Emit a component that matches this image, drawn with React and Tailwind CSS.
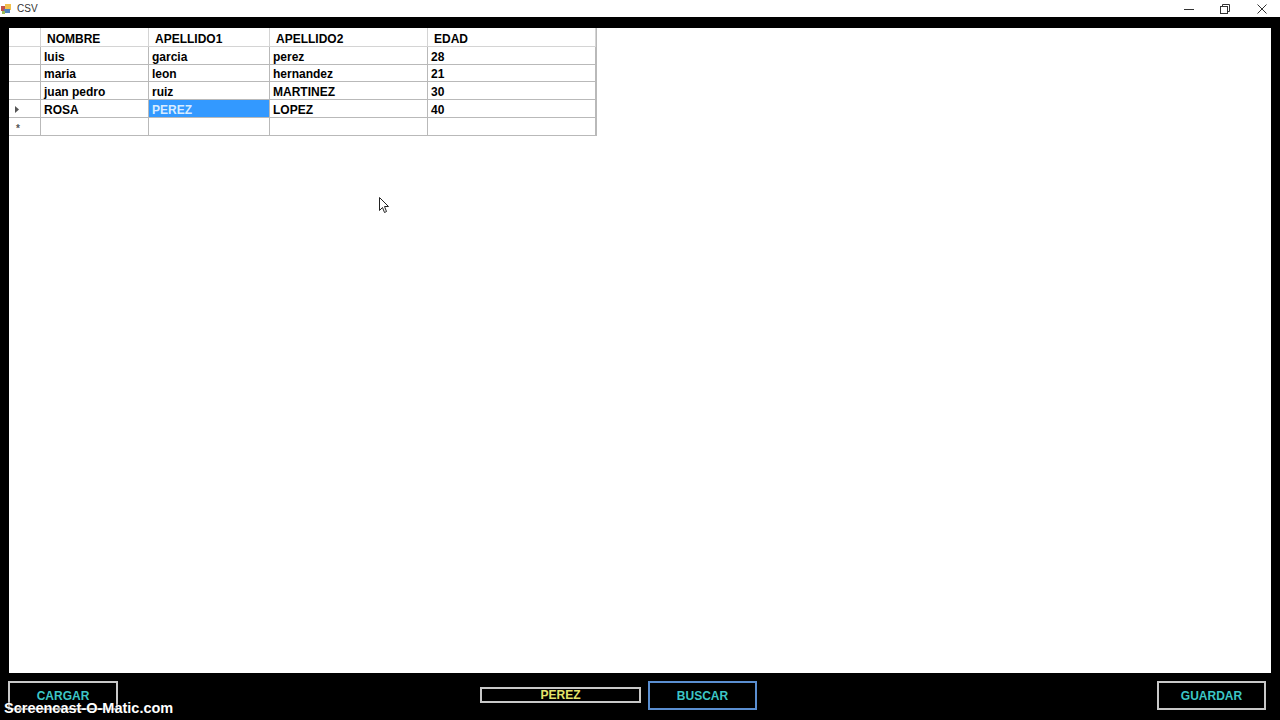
import React from "react";

const cols = ["NOMBRE", "APELLIDO1", "APELLIDO2", "EDAD"];
const rows = [
  { h: 18, cells: ["luis", "garcia", "perez", "28"] },
  { h: 17, cells: ["maria", "leon", "hernandez", "21"] },
  { h: 18, cells: ["juan pedro", "ruiz", "MARTINEZ", "30"] },
  { h: 18, cells: ["ROSA", "PEREZ", "LOPEZ", "40"], current: true },
];
const widths = ["w-[108px]", "w-[121px]", "w-[158px]", "w-[168px]"];

function Cell({ w, children, className = "" }) {
  return (
    <div className={`${w} shrink-0 border-r border-[#b9b9b9] flex items-center ${className}`}>
      {children}
    </div>
  );
}

export default function App() {
  const font = { fontFamily: '"Liberation Sans", Arial, sans-serif' };
  return (
    <div className="relative w-[1280px] h-[720px] bg-black flex flex-col overflow-hidden" style={font}>
      {/* Title bar */}
      <div className="h-[17px] bg-white flex items-center shrink-0">
        <svg width="11" height="11" viewBox="0 0 11 11" className="ml-[1px]">
          <rect x="0" y="3" width="5" height="5" fill="#c0504d" />
          <rect x="4" y="1" width="6" height="6" fill="#f2c14e" />
          <rect x="3" y="6" width="6" height="4" fill="#4f81bd" />
          <rect x="1" y="8" width="3" height="3" fill="#9bbb59" />
        </svg>
        <span className="ml-[5px] text-[10px] text-[#333] leading-none">CSV</span>
        <div className="ml-auto flex items-center h-full">
          <svg width="10" height="10" viewBox="0 0 10 10" className="mr-[26px]">
            <line x1="0" y1="5.5" x2="10" y2="5.5" stroke="#333" strokeWidth="1" />
          </svg>
          <svg width="10" height="10" viewBox="0 0 10 10" className="mr-[27px]">
            <rect x="0.5" y="2.5" width="7" height="7" fill="none" stroke="#333" />
            <path d="M2.5 2.5 V0.5 H9.5 V7.5 H7.5" fill="none" stroke="#333" />
          </svg>
          <svg width="10" height="10" viewBox="0 0 10 10" className="mr-[13px]">
            <path d="M0.5 0.5 L9.5 9.5 M9.5 0.5 L0.5 9.5" stroke="#333" strokeWidth="1" />
          </svg>
        </div>
      </div>
      <div className="h-[11px] shrink-0" />

      {/* Middle */}
      <div className="flex h-[645px] shrink-0">
        <div className="w-[9px] shrink-0" />
        <div className="flex-1 bg-white">
          <div className="w-[588px] border-r border-[#b9b9b9] text-[12px] font-bold text-black">
            {/* header */}
            <div className="flex h-[19px] border-b border-[#d4d4d4]">
              <div className="w-[32px] shrink-0 border-r border-[#d4d4d4]" />
              {cols.map((c, i) => (
                <div key={c} className={`${widths[i]} shrink-0 border-r border-[#d4d4d4] flex items-center pl-[6px] pt-[3px] leading-none`}>
                  {c}
                </div>
              ))}
            </div>
            {rows.map((r, ri) => (
              <div key={ri} className="flex border-b border-[#b9b9b9]" style={{ height: r.h }}>
                <div className="w-[32px] shrink-0 border-r border-[#b9b9b9] flex items-center pl-[6px] pt-[1px]">
                  {r.current && (
                    <svg width="5" height="7" viewBox="0 0 5 7">
                      <path d="M0 0 L4 3.5 L0 7 Z" fill="#555" />
                    </svg>
                  )}
                </div>
                {r.cells.map((c, i) => {
                  const sel = r.current && i === 1;
                  return (
                    <Cell
                      key={i}
                      w={widths[i]}
                      className={`pl-[3px] pt-[2px] leading-none ${sel ? "bg-[#3399ff] text-[#d8ecff]" : ""}`}
                    >
                      {c}
                    </Cell>
                  );
                })}
              </div>
            ))}
            <div className="flex h-[18px] border-b border-[#b9b9b9]">
              <div className="w-[32px] shrink-0 border-r border-[#b9b9b9] flex items-center pl-[7px] pt-[3px] text-[#555] text-[10px]">
                *
              </div>
              {widths.map((w, i) => (
                <Cell key={i} w={w} />
              ))}
            </div>
          </div>
        </div>
        <div className="w-[9px] shrink-0" />
      </div>

      {/* Bottom */}
      <div className="flex-1 flex items-start pt-[8px] text-[12px] font-bold">
        <div className="ml-[8px] w-[110px] h-[29px] border-2 border-[#c8c8c8] flex items-center justify-center text-[#3cc6c6]">
          CARGAR
        </div>
        <div className="ml-[362px] mt-[6px] w-[161px] h-[16px] border-2 border-[#c8c8c8] flex items-center justify-center text-[#e4e46a] leading-none">
          PEREZ
        </div>
        <div className="ml-[7px] w-[109px] h-[29px] border-2 border-[#5a8ed0] flex items-center justify-center text-[#3cc6c6]">
          BUSCAR
        </div>
        <div className="ml-auto mr-[14px] w-[109px] h-[29px] border-2 border-[#c8c8c8] flex items-center justify-center text-[#3cc6c6]">
          GUARDAR
        </div>
      </div>

      {/* Watermark */}
      <div className="absolute left-[4px] top-[701px] text-white font-bold text-[14.5px] leading-none" style={{ textShadow: "0 0 2px #000" }}>
        Screencast-O-Matic.com
      </div>

      {/* Mouse cursor */}
      <svg className="absolute left-[379px] top-[197px]" width="12" height="18" viewBox="0 0 12 18">
        <path d="M0.5 0.5 L0.5 13.5 L3.5 10.5 L5.5 15.5 L7.5 14.5 L5.5 9.5 L9.5 9.5 Z" fill="#fff" stroke="#222" strokeWidth="1" strokeLinejoin="round" />
      </svg>
    </div>
  );
}
